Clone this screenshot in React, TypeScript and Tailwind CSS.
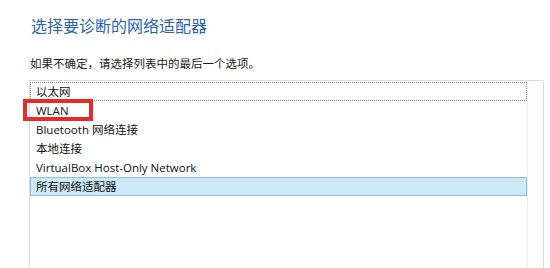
const items = [
  "以太网",
  "WLAN",
  "Bluetooth 网络连接",
  "本地连接",
  "VirtualBox Host-Only Network",
  "所有网络适配器",
];

export default function App() {
  return (
    <div
      className="relative h-[268px] w-[550px] overflow-hidden bg-white text-[#111]"
      style={{ fontFamily: '"Open Sans", "Noto Sans CJK SC", sans-serif' }}
    >
      <div className="pl-[31px] pt-[15px] text-[16px] leading-[22px] text-[#2b63ad]">
        选择要诊断的网络适配器
      </div>
      <div className="pl-[30px] pt-[19px] text-[11.5px] leading-[16px] text-[#1a1a1a]">
        如果不确定，请选择列表中的最后一个选项。
      </div>
      <div className="ml-[29px] mt-[8px] flex h-[200px] w-[515px] border border-b-0 border-[#dadada]">
        <div className="flex-1 pt-[1px]">
          {items.map((t, i) => (
            <div
              key={t}
              className={
                "flex h-[19px] items-center pl-[5px] text-[11.5px] " +
                (i === 0
                  ? "border border-dotted border-[#888]"
                  : i === items.length - 1
                  ? "border border-[#86c0dc] bg-[#cde8f6]"
                  : "border border-transparent")
              }
            >
              {t}
            </div>
          ))}
        </div>
        <div className="w-[16px] border-l border-[#eeeeee] bg-[#fdfdfd]" />
      </div>
      <div className="absolute left-[23px] top-[99px] h-[22px] w-[70px] border-4 border-[#e82a2a]" />
    </div>
  );
}
